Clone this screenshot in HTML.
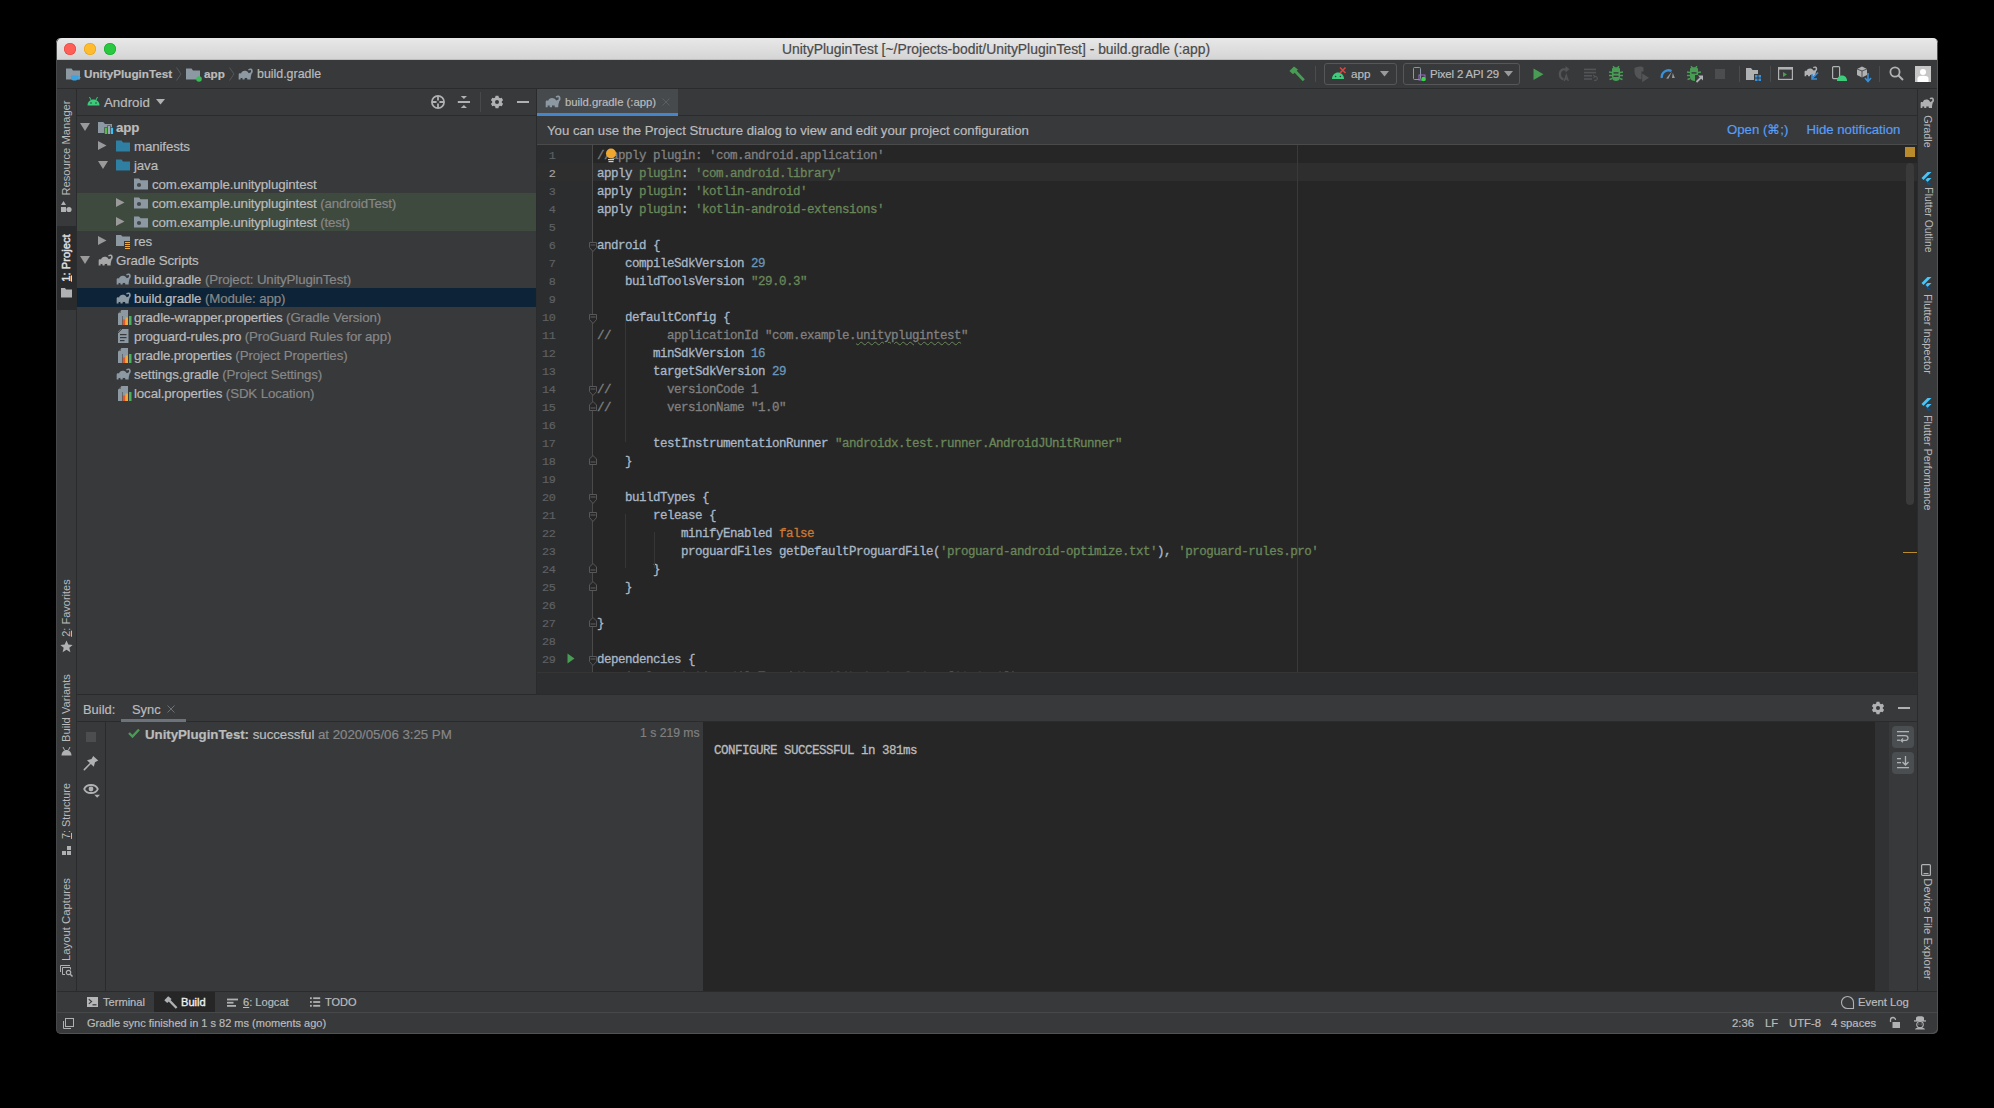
<!DOCTYPE html>
<html><head><meta charset="utf-8">
<style>
*{box-sizing:border-box;margin:0;padding:0}
html,body{width:1994px;height:1108px;background:#000;overflow:hidden}
body{font-family:"Liberation Sans",sans-serif;color:#BBBBBB;position:relative}
.a{position:absolute}
.t{position:absolute;white-space:pre;-webkit-text-stroke:0.2px currentColor}
#win{position:absolute;left:0;top:0;width:1994px;height:1108px;clip-path:inset(38px 56px 74px 56px round 5px);background:#37393B}
.ln{position:absolute;text-align:right;font-family:"Liberation Mono",monospace;font-size:11.8px;letter-spacing:-0.4px;line-height:18px;height:18px;white-space:pre;-webkit-text-stroke:0.2px currentColor}
.code{position:absolute;font-family:"Liberation Mono",monospace;font-size:12.5px;letter-spacing:-0.5px;color:#A9B7C6;line-height:18px;height:18px;white-space:pre;-webkit-text-stroke:0.3px currentColor}
svg{overflow:visible}
</style></head><body>
<div id="win">
<div class="a" style="left:56px;top:38px;width:1882px;height:22px;background:linear-gradient(#E8E8E8,#D4D4D4);"></div>
<div class="a" style="left:56px;top:59px;width:1882px;height:1px;background:#BDBDBD;"></div>
<div class="a" style="left:64px;top:43px;width:12px;height:12px;border-radius:50%;background:#FE5F57;box-shadow:inset 0 0 0 0.6px #E2463F"></div>
<div class="a" style="left:84px;top:43px;width:12px;height:12px;border-radius:50%;background:#FEBC2E;box-shadow:inset 0 0 0 0.6px #E1A116"></div>
<div class="a" style="left:104px;top:43px;width:12px;height:12px;border-radius:50%;background:#28C840;box-shadow:inset 0 0 0 0.6px #13A827"></div>
<div class="t" style="left:782px;top:41px;font-size:13.9px;line-height:16px;height:16px;color:#4A4A4A;">UnityPluginTest [~/Projects-bodit/UnityPluginTest] - build.gradle (:app)</div>
<div class="a" style="left:56px;top:60px;width:1882px;height:28px;background:#37393B;"></div>
<div class="a" style="left:56px;top:88px;width:1882px;height:1px;background:#2A2B2C;"></div>
<svg class="a" style="left:66px;top:68px" width="14" height="12" viewBox="0 0 14 12"><path d="M0,0.5 L5.5,0.5 L7,2.5 L14,2.5 L14,11.5 L0,11.5 Z" fill="#8C99A3"/></svg>
<svg class="a" style="left:70px;top:75px" width="12" height="6" viewBox="0 0 12 6"><path d="M1,0.5 L8,0.5 L8,3 C8,5 6.5,5.5 4.5,5.5 C2.5,5.5 1,5 1,3 Z" fill="#3BA3E0"/><path d="M8,1.5 C10.5,1 11.5,3.5 8,4" stroke="#3BA3E0" fill="none" stroke-width="1"/></svg>
<div class="t" style="left:84px;top:66px;font-size:11.7px;line-height:16px;height:16px;color:#BBBBBB;font-weight:bold">UnityPluginTest</div>
<svg class="a" style="left:176px;top:67px" width="6" height="14" viewBox="0 0 6 14"><path d="M0.5,0.5 L5,7 L0.5,13.5" stroke="#555759" fill="none"/></svg>
<svg class="a" style="left:186px;top:68px" width="14" height="12" viewBox="0 0 14 12"><path d="M0,0.5 L5.5,0.5 L7,2.5 L14,2.5 L14,11.5 L0,11.5 Z" fill="#8C99A3"/></svg>
<svg class="a" style="left:196px;top:76px" width="6" height="6" viewBox="0 0 6 6"><circle cx="3" cy="3" r="2.8" fill="#3DBA5A"/></svg>
<div class="t" style="left:204px;top:66px;font-size:11.7px;line-height:16px;height:16px;color:#BBBBBB;font-weight:bold">app</div>
<svg class="a" style="left:229px;top:67px" width="6" height="14" viewBox="0 0 6 14"><path d="M0.5,0.5 L5,7 L0.5,13.5" stroke="#555759" fill="none"/></svg>
<svg class="a" style="left:238px;top:68px" width="16" height="13" viewBox="0 0 16 13"><g transform="scale(0.95)"><path d="M0.7,12.2 L0.7,6.8 C0.7,5.8 1.4,5.3 2.4,5.5 L3.2,5.7 C3.7,3.8 5.2,2.9 7,2.9 C8.8,2.9 10.1,3.6 10.9,4.9 C11.6,5.9 12.7,6 13.8,5.6 L14.2,6.8 C13.6,8.3 13.3,9.8 13.3,12.2 L9.8,12.2 L9.5,10.3 C8.8,10.6 7.9,10.6 7.2,10.3 L6.9,12.2 L4.8,12.2 L4.5,10.3 C3.9,10.6 3.3,10.6 2.8,10.3 L2.6,12.2 Z" fill="#8C99A3"/><path d="M12.2,6.2 C14,5.8 14.9,4.2 14.6,2.6 C14.3,1.3 13,1 11.6,1.7" stroke="#8C99A3" stroke-width="1.7" fill="none" stroke-linecap="round"/></g></svg>
<div class="t" style="left:257px;top:66px;font-size:12.4px;line-height:16px;height:16px;color:#BBBBBB;">build.gradle</div>
<svg class="a" style="left:1289px;top:66px" width="17" height="16" viewBox="0 0 17 16"><path d="M0.4,5 L5,0.4 L9,3.5 L4,8.3 Z" fill="#499C54"/><path d="M6.2,5.2 L14.8,14.2" stroke="#499C54" stroke-width="2.8"/></svg>
<div class="a" style="left:1315px;top:66px;width:1px;height:16px;background:#4A4C4E;"></div>
<div class="a" style="left:1324px;top:63px;width:73px;height:22px;border:1px solid #555759;border-radius:3px"></div>
<svg class="a" style="left:1331px;top:67px" width="16" height="14" viewBox="0 0 16 14"><path d="M1,12 C1,8 4,5.5 7,5.5 C10,5.5 13,8 13,12 Z" fill="#3DCC7C"/><circle cx="4.6" cy="9.5" r="0.8" fill="#37393B"/><circle cx="9.4" cy="9.5" r="0.8" fill="#37393B"/><path d="M9,0.5 L14.5,6 M14.5,0.5 L9,6" stroke="#E0443E" stroke-width="1.6"/></svg>
<div class="t" style="left:1351px;top:66px;font-size:11.7px;line-height:16px;height:16px;color:#BBBBBB;">app</div>
<svg class="a" style="left:1380px;top:71px" width="9" height="6" viewBox="0 0 9 6"><path d="M0,0 L9,0 L4.5,5.5 Z" fill="#9A9A9A"/></svg>
<div class="a" style="left:1403px;top:63px;width:117px;height:22px;border:1px solid #555759;border-radius:3px"></div>
<svg class="a" style="left:1413px;top:67px" width="14" height="16" viewBox="0 0 14 16"><rect x="0.5" y="0.5" width="7" height="12" rx="1" stroke="#8C99A3" fill="none"/><rect x="6" y="8" width="6" height="5" fill="none" stroke="#9B6BD0"/><circle cx="10.5" cy="12" r="2.2" fill="#3DD34C"/></svg>
<div class="t" style="left:1430px;top:66px;font-size:11.4px;line-height:16px;height:16px;color:#BBBBBB;letter-spacing:-0.15px">Pixel 2 API 29</div>
<svg class="a" style="left:1504px;top:71px" width="9" height="6" viewBox="0 0 9 6"><path d="M0,0 L9,0 L4.5,5.5 Z" fill="#9A9A9A"/></svg>
<svg class="a" style="left:1533px;top:68px" width="11" height="13" viewBox="0 0 11 13"><path d="M0.5,0.5 L10.5,6.2 L0.5,12 Z" fill="#499C54"/></svg>
<svg class="a" style="left:1556px;top:66px" width="16" height="16" viewBox="0 0 16 16"><path d="M7.5,13.5 A5.5,5.5 0 0 1 7,3.3 L10,3.3" stroke="#525456" stroke-width="2.2" fill="none"/><path d="M9.5,0 L13.5,3.3 L9.5,6.6 Z" fill="#525456"/><path d="M8.3,15 L10.3,9 L12.3,15 M9,13 L11.6,13" stroke="#525456" stroke-width="1.3" fill="none"/></svg>
<svg class="a" style="left:1584px;top:68px" width="15" height="14" viewBox="0 0 15 14"><rect x="0" y="0.6" width="12" height="1.6" fill="#525456"/><rect x="0" y="3.8" width="12" height="1.6" fill="#525456"/><rect x="0" y="7" width="8" height="1.6" fill="#525456"/><rect x="0" y="10.2" width="8" height="1.6" fill="#525456"/><path d="M10,8.5 C13,8 14,10 13,11.5 C12.3,12.5 11,12.6 10,12.2" stroke="#525456" stroke-width="1.2" fill="none"/><path d="M9.2,7 L10.8,8.6 L9.5,10" stroke="#525456" stroke-width="1.1" fill="none"/></svg>
<svg class="a" style="left:1609px;top:66px" width="14" height="16" viewBox="0 0 14 16"><path d="M3,3 C3,1.8 4.5,1.2 7,1.2 C9.5,1.2 11,1.8 11,3 L11,11 C11,13.5 9.5,15 7,15 C4.5,15 3,13.5 3,11 Z" fill="#499C54"/><path d="M4,0.2 L5.5,2 M10,0.2 L8.5,2 M0,6 L3,6.5 M14,6 L11,6.5 M0,9.5 L3,9.5 M14,9.5 L11,9.5 M0.5,13.5 L3.2,12.5 M13.5,13.5 L10.8,12.5" stroke="#499C54" stroke-width="1.5"/><rect x="4.5" y="6.2" width="5" height="1.4" fill="#37393B"/><rect x="4.5" y="9.6" width="5" height="1.4" fill="#37393B"/></svg>
<svg class="a" style="left:1634px;top:66px" width="16" height="17" viewBox="0 0 16 17"><path d="M0.5,2 C3,1 5.5,0.6 7.5,0.6 L9.5,1.5 L9.5,5.5 L7.5,5.5 L7.5,13.5 C3,12.5 0.5,9.5 0.5,5.5 Z" fill="#525456"/><path d="M8.2,7.5 L15,11.8 L8.2,16.2 Z" fill="#525456"/></svg>
<svg class="a" style="left:1660px;top:68px" width="16" height="12" viewBox="0 0 16 12"><path d="M1.8,10 A6.8,6.8 0 0 1 11.5,3" stroke="#3A8FD6" stroke-width="2.4" fill="none"/><path d="M6.2,10.5 L12,3.2 L8.4,10.8 Z" fill="#9A9A9A"/><path d="M12.8,4.8 L14.8,10 L12,10 Z" fill="#9A9A9A"/></svg>
<svg class="a" style="left:1687px;top:66px" width="17" height="17" viewBox="0 0 17 17"><path d="M3,3 C3,1.8 4.5,1.2 7,1.2 C9.5,1.2 11,1.8 11,3 L11,9 L8,9 L8,15 C5,15 3,13.5 3,11 Z" fill="#499C54"/><path d="M4,0.2 L5.5,2 M10,0.2 L8.5,2 M0,6 L3,6.5 M14,6 L11,6.5 M0,9.5 L3,9.5 M0.5,13.5 L3.2,12.5" stroke="#499C54" stroke-width="1.5"/><rect x="4.5" y="6.2" width="5" height="1.4" fill="#37393B"/><path d="M9.5,16 L15,10.5" stroke="#AFB1B3" stroke-width="1.8"/><path d="M11,9.5 L16,9.5 L16,14.5 Z" fill="#AFB1B3"/></svg>
<div class="a" style="left:1715px;top:69px;width:10px;height:10px;background:#4B4D4F;"></div>
<div class="a" style="left:1739px;top:66px;width:1px;height:16px;background:#4A4C4E;"></div>
<svg class="a" style="left:1746px;top:67px" width="16" height="14" viewBox="0 0 16 14"><path d="M0,1 L5,1 L6.5,3 L12,3 L12,7 L8,7 L8,13 L0,13 Z" fill="#AFB1B3"/><rect x="9" y="8" width="2.5" height="2.5" fill="#3A8FD6"/><rect x="12.5" y="8" width="2.5" height="2.5" fill="#3A8FD6"/><rect x="9" y="11.5" width="2.5" height="2.5" fill="#3A8FD6"/><rect x="12.5" y="11.5" width="2.5" height="2.5" fill="#3A8FD6"/></svg>
<div class="a" style="left:1770px;top:66px;width:1px;height:16px;background:#4A4C4E;"></div>
<svg class="a" style="left:1778px;top:67px" width="15" height="13" viewBox="0 0 15 13"><rect x="0.6" y="0.6" width="13.8" height="11.8" stroke="#AFB1B3" fill="none" stroke-width="1.2"/><rect x="0.6" y="0.6" width="13.8" height="2" fill="#AFB1B3"/><path d="M5,5 L9,7.5 L5,10 Z" fill="#499C54"/></svg>
<svg class="a" style="left:1804px;top:66px" width="14" height="12" viewBox="0 0 14 12"><g transform="scale(0.85)"><path d="M0.7,12.2 L0.7,6.8 C0.7,5.8 1.4,5.3 2.4,5.5 L3.2,5.7 C3.7,3.8 5.2,2.9 7,2.9 C8.8,2.9 10.1,3.6 10.9,4.9 C11.6,5.9 12.7,6 13.8,5.6 L14.2,6.8 C13.6,8.3 13.3,9.8 13.3,12.2 L9.8,12.2 L9.5,10.3 C8.8,10.6 7.9,10.6 7.2,10.3 L6.9,12.2 L4.8,12.2 L4.5,10.3 C3.9,10.6 3.3,10.6 2.8,10.3 L2.6,12.2 Z" fill="#AFB1B3"/><path d="M12.2,6.2 C14,5.8 14.9,4.2 14.6,2.6 C14.3,1.3 13,1 11.6,1.7" stroke="#AFB1B3" stroke-width="1.7" fill="none" stroke-linecap="round"/></g></svg>
<svg class="a" style="left:1811px;top:72px" width="8" height="9" viewBox="0 0 8 9"><path d="M7,0.5 L1.5,6 M1,2 L1,7 L6,7" stroke="#3A8FD6" stroke-width="1.6" fill="none"/></svg>
<svg class="a" style="left:1832px;top:66px" width="14" height="16" viewBox="0 0 14 16"><rect x="0.6" y="0.6" width="7" height="12" rx="1" stroke="#AFB1B3" fill="none" stroke-width="1.2"/><path d="M5,15 C5,11 7.5,9.5 10,9.5 C12.5,9.5 15,11 15,15 Z" fill="#3DCC7C"/></svg>
<svg class="a" style="left:1856px;top:66px" width="16" height="17" viewBox="0 0 16 17"><path d="M1,3 L6,0.5 L11,3 L11,9 L6,11.5 L1,9 Z" fill="#AFB1B3"/><path d="M6,5 L6,11.5 M1,3 L6,5 L11,3" stroke="#37393B" stroke-width="0.8" fill="none"/><path d="M12,7 L12,15 M9,12 L12,15.5 L15,12" stroke="#3A8FD6" stroke-width="1.6" fill="none"/></svg>
<div class="a" style="left:1879px;top:66px;width:1px;height:16px;background:#4A4C4E;"></div>
<svg class="a" style="left:1889px;top:66px" width="15" height="15" viewBox="0 0 15 15"><circle cx="6" cy="6" r="4.6" stroke="#AFB1B3" stroke-width="1.8" fill="none"/><path d="M9.5,9.5 L14,14" stroke="#AFB1B3" stroke-width="2"/></svg>
<svg class="a" style="left:1915px;top:66px" width="16" height="16" viewBox="0 0 16 16"><rect x="0" y="0" width="16" height="16" fill="#C6C6C6"/><circle cx="8" cy="6" r="3" fill="#fff"/><path d="M2.5,16 L2.5,12.5 C2.5,10.5 4.5,9.8 8,9.8 C11.5,9.8 13.5,10.5 13.5,12.5 L13.5,16 Z" fill="#fff"/></svg>
<div class="a" style="left:56px;top:89px;width:20px;height:902px;background:#37393B;"></div>
<div class="a" style="left:76px;top:89px;width:1px;height:902px;background:#2A2B2C;"></div>
<div class="a" style="left:1917px;top:89px;width:1px;height:902px;background:#2A2B2C;"></div>
<div class="a" style="left:57px;top:226px;width:19px;height:84px;background:#2A2B2D;"></div>
<div class="a" style="left:59px;top:196px;width:96px;height:14px;transform:rotate(-90deg);transform-origin:0 0;font-size:11.2px;line-height:14px;white-space:pre;color:#BBBBBB;text-align:center">Resource Manager</div>
<svg class="a" style="left:61px;top:201px" width="11" height="12" viewBox="0 0 11 12"><path d="M2.5,0 L5,4 L0,4 Z" fill="#AFB1B3"/><rect x="0" y="6" width="5" height="5" fill="#AFB1B3"/><circle cx="8" cy="8.5" r="2.6" fill="#AFB1B3"/></svg>
<div class="a" style="left:59px;top:282px;width:48px;height:14px;transform:rotate(-90deg);transform-origin:0 0;font-size:11.2px;line-height:14px;white-space:pre;color:#E0E0E0;-webkit-text-stroke:0.45px #E0E0E0;text-align:center"><u>1</u>: Project</div>
<svg class="a" style="left:61px;top:288px" width="11" height="10" viewBox="0 0 11 10"><path d="M0,0 L4,0 L5,1.5 L11,1.5 L11,9.5 L0,9.5 Z" fill="#AFB1B3"/></svg>
<div class="a" style="left:59px;top:637px;width:58px;height:14px;transform:rotate(-90deg);transform-origin:0 0;font-size:11.0px;line-height:14px;white-space:pre;color:#BBBBBB;text-align:center"><u>2</u>: Favorites</div>
<svg class="a" style="left:60px;top:640px" width="13" height="13" viewBox="0 0 13 13"><path d="M6.5,0.5 L8.3,4.6 L12.7,4.9 L9.3,7.8 L10.4,12.2 L6.5,9.8 L2.6,12.2 L3.7,7.8 L0.3,4.9 L4.7,4.6 Z" fill="#AFB1B3"/></svg>
<div class="a" style="left:59px;top:742px;width:68px;height:14px;transform:rotate(-90deg);transform-origin:0 0;font-size:11.15px;line-height:14px;white-space:pre;color:#BBBBBB;text-align:center">Build Variants</div>
<svg class="a" style="left:61px;top:747px" width="11" height="9" viewBox="0 0 11 9"><path d="M0.5,8.5 C0.5,5 3,3 5.5,3 C8,3 10.5,5 10.5,8.5 Z" fill="#AFB1B3"/><path d="M2,0 L3.5,3 M9,0 L7.5,3" stroke="#AFB1B3"/></svg>
<div class="a" style="left:59px;top:839px;width:56px;height:14px;transform:rotate(-90deg);transform-origin:0 0;font-size:10.8px;line-height:14px;white-space:pre;color:#BBBBBB;text-align:center"><u>7</u>: Structure</div>
<svg class="a" style="left:61px;top:845px" width="11" height="11" viewBox="0 0 11 11"><rect x="6" y="1" width="4" height="4" fill="#AFB1B3"/><rect x="1" y="6" width="4" height="4" fill="#AFB1B3"/><rect x="6" y="6" width="4" height="4" fill="#AFB1B3"/></svg>
<div class="a" style="left:59px;top:961px;width:83px;height:14px;transform:rotate(-90deg);transform-origin:0 0;font-size:11.3px;line-height:14px;white-space:pre;color:#BBBBBB;text-align:center">Layout Captures</div>
<svg class="a" style="left:59px;top:964px" width="15" height="14" viewBox="0 0 15 14"><path d="M1.5,8 L1.5,1.5 L11,1.5" stroke="#AFB1B3" fill="none"/><path d="M6,10.5 L3.5,10.5 L3.5,3.5 L11.5,3.5 L11.5,5.5" stroke="#AFB1B3" fill="none"/><circle cx="9.5" cy="8.5" r="2.2" stroke="#AFB1B3" stroke-width="1.2" fill="none"/><path d="M11,10 L13.5,12.5" stroke="#AFB1B3" stroke-width="1.4"/></svg>
<svg class="a" style="left:1920px;top:97px" width="15" height="12" viewBox="0 0 15 12"><g transform="scale(0.9)"><path d="M0.7,12.2 L0.7,6.8 C0.7,5.8 1.4,5.3 2.4,5.5 L3.2,5.7 C3.7,3.8 5.2,2.9 7,2.9 C8.8,2.9 10.1,3.6 10.9,4.9 C11.6,5.9 12.7,6 13.8,5.6 L14.2,6.8 C13.6,8.3 13.3,9.8 13.3,12.2 L9.8,12.2 L9.5,10.3 C8.8,10.6 7.9,10.6 7.2,10.3 L6.9,12.2 L4.8,12.2 L4.5,10.3 C3.9,10.6 3.3,10.6 2.8,10.3 L2.6,12.2 Z" fill="#AFB1B3"/><path d="M12.2,6.2 C14,5.8 14.9,4.2 14.6,2.6 C14.3,1.3 13,1 11.6,1.7" stroke="#AFB1B3" stroke-width="1.7" fill="none" stroke-linecap="round"/></g></svg>
<div class="a" style="left:1935px;top:115px;width:33px;height:14px;transform:rotate(90deg);transform-origin:0 0;font-size:10.85px;line-height:14px;white-space:pre;color:#BBBBBB;text-align:center">Gradle</div>
<svg class="a" style="left:1921px;top:172px" width="11" height="13" viewBox="0 0 11 13"><path d="M6.5,0 L10.5,0 L2.5,8 L0.5,6 Z" fill="#47C5FB"/><path d="M6.5,6 L10.5,6 L6.5,10 L4.5,8 Z" fill="#47C5FB"/><path d="M4.5,8 L6.5,10 L10.5,12.5 L6.5,12.5 Z" fill="#00569E"/></svg>
<div class="a" style="left:1935px;top:187px;width:66px;height:14px;transform:rotate(90deg);transform-origin:0 0;font-size:10.4px;line-height:14px;white-space:pre;color:#BBBBBB;text-align:center">Flutter Outline</div>
<svg class="a" style="left:1921px;top:277px" width="11" height="13" viewBox="0 0 11 13"><path d="M6.5,0 L10.5,0 L2.5,8 L0.5,6 Z" fill="#47C5FB"/><path d="M6.5,6 L10.5,6 L6.5,10 L4.5,8 Z" fill="#47C5FB"/><path d="M4.5,8 L6.5,10 L10.5,12.5 L6.5,12.5 Z" fill="#00569E"/></svg>
<div class="a" style="left:1935px;top:294px;width:80px;height:14px;transform:rotate(90deg);transform-origin:0 0;font-size:11.05px;line-height:14px;white-space:pre;color:#BBBBBB;text-align:center">Flutter Inspector</div>
<svg class="a" style="left:1921px;top:398px" width="11" height="13" viewBox="0 0 11 13"><path d="M6.5,0 L10.5,0 L2.5,8 L0.5,6 Z" fill="#47C5FB"/><path d="M6.5,6 L10.5,6 L6.5,10 L4.5,8 Z" fill="#47C5FB"/><path d="M4.5,8 L6.5,10 L10.5,12.5 L6.5,12.5 Z" fill="#00569E"/></svg>
<div class="a" style="left:1935px;top:415px;width:95px;height:14px;transform:rotate(90deg);transform-origin:0 0;font-size:10.8px;line-height:14px;white-space:pre;color:#BBBBBB;text-align:center">Flutter Performance</div>
<svg class="a" style="left:1921px;top:864px" width="10" height="12" viewBox="0 0 10 12"><rect x="0.6" y="0.6" width="8.8" height="10.8" rx="1" stroke="#AFB1B3" fill="none" stroke-width="1.2"/><rect x="2.5" y="9" width="5" height="1" fill="#AFB1B3"/></svg>
<div class="a" style="left:1935px;top:878px;width:102px;height:14px;transform:rotate(90deg);transform-origin:0 0;font-size:11.35px;line-height:14px;white-space:pre;color:#BBBBBB;text-align:center">Device File Explorer</div>
<div class="a" style="left:77px;top:89px;width:459px;height:26px;background:#37393B;"></div>
<div class="a" style="left:77px;top:115px;width:459px;height:1px;background:#2A2B2C;"></div>
<div class="a" style="left:536px;top:89px;width:1px;height:605px;background:#2A2B2C;"></div>
<svg class="a" style="left:87px;top:97px" width="13" height="9" viewBox="0 0 13 9"><path d="M0.5,8.5 C0.5,5 3,2.5 6.5,2.5 C10,2.5 12.5,5 12.5,8.5 Z" fill="#3DCC7C"/><path d="M2.5,0 L4,3 M10.5,0 L9,3" stroke="#3DCC7C" stroke-width="1"/><circle cx="4" cy="6" r="0.8" fill="#37393B"/><circle cx="9" cy="6" r="0.8" fill="#37393B"/></svg>
<div class="t" style="left:104px;top:94px;font-size:13.3px;line-height:17px;height:17px;color:#BBBBBB;">Android</div>
<svg class="a" style="left:156px;top:99px" width="9" height="6" viewBox="0 0 9 6"><path d="M0,0 L9,0 L4.5,5.5 Z" fill="#AFB1B3"/></svg>
<svg class="a" style="left:431px;top:95px" width="14" height="14" viewBox="0 0 14 14"><circle cx="7" cy="7" r="6.1" stroke="#AFB1B3" stroke-width="1.7" fill="none"/><path d="M7,1 L7,5.6 M7,8.4 L7,13 M1,7 L5.6,7 M8.4,7 L13,7" stroke="#AFB1B3" stroke-width="1.8"/></svg>
<svg class="a" style="left:457px;top:95px" width="14" height="14" viewBox="0 0 14 14"><rect x="0.8" y="6" width="12.2" height="2" fill="#AFB1B3"/><path d="M3.8,1 L10,1 L6.9,3.9 Z" fill="#AFB1B3"/><path d="M3.8,13 L10,13 L6.9,10.1 Z" fill="#AFB1B3"/></svg>
<div class="a" style="left:480px;top:92px;width:1px;height:20px;background:#47494B;"></div>
<svg class="a" style="left:490px;top:95px" width="14" height="14" viewBox="0 0 14 14"><path d="M8.84,2.46 L8.44,0.76 L5.56,0.76 L5.16,2.46 L3.98,3.14 L2.32,2.64 L0.88,5.13 L2.15,6.32 L2.15,7.68 L0.88,8.87 L2.32,11.36 L3.98,10.86 L5.16,11.54 L5.56,13.24 L8.44,13.24 L8.84,11.54 L10.02,10.86 L11.68,11.36 L13.12,8.87 L11.85,7.68 L11.85,6.32 L13.12,5.13 L11.68,2.64 L10.02,3.14 Z" fill="#AFB1B3"/><circle cx="7" cy="7" r="2" fill="#37393B"/></svg>
<div class="a" style="left:517px;top:101px;width:12px;height:2px;background:#AFB1B3;"></div>
<svg class="a" style="left:80px;top:123px" width="10" height="8" viewBox="0 0 10 8"><path d="M0,0 L10,0 L5,8 Z" fill="#9A9A9A"/></svg>
<svg class="a" style="left:98px;top:122px" width="17" height="13" viewBox="0 0 17 13"><path d="M0,0 L5.2,0 L7,2 L14,2 L14,11 L0,11 Z" fill="#8C99A3"/><rect x="6.3" y="5.3" width="3.3" height="7.2" fill="#37393B"/><rect x="9.3" y="3.4" width="3.3" height="9.1" fill="#37393B"/><rect x="12.3" y="5.3" width="3.3" height="7.2" fill="#37393B"/><rect x="6.8" y="5.8" width="2.3" height="6.2" fill="#55B94C"/><rect x="9.8" y="3.9" width="2.3" height="8.1" fill="#9AA7B0"/><rect x="12.8" y="5.8" width="2.3" height="6.2" fill="#3BC0F0"/></svg>
<div class="t" style="left:116px;top:119px;font-size:13.3px;line-height:18px;height:18px;color:#BBBBBB;font-weight:bold;letter-spacing:-0.12px">app</div>
<svg class="a" style="left:98px;top:141px" width="9" height="9" viewBox="0 0 9 9"><path d="M0,0 L8.5,4.5 L0,9 Z" fill="#9A9A9A"/></svg>
<svg class="a" style="left:116px;top:140px" width="14" height="12" viewBox="0 0 14 12"><path d="M0,0.5 L5.5,0.5 L7,2.5 L14,2.5 L14,11.5 L0,11.5 Z" fill="#2F7FA3"/></svg>
<div class="t" style="left:134px;top:138px;font-size:13.3px;line-height:18px;height:18px;color:#BBBBBB;letter-spacing:-0.12px">manifests</div>
<svg class="a" style="left:98px;top:161px" width="10" height="8" viewBox="0 0 10 8"><path d="M0,0 L10,0 L5,8 Z" fill="#9A9A9A"/></svg>
<svg class="a" style="left:116px;top:159px" width="14" height="12" viewBox="0 0 14 12"><path d="M0,0.5 L5.5,0.5 L7,2.5 L14,2.5 L14,11.5 L0,11.5 Z" fill="#2F7FA3"/></svg>
<div class="t" style="left:134px;top:157px;font-size:13.3px;line-height:18px;height:18px;color:#BBBBBB;letter-spacing:-0.12px">java</div>
<svg class="a" style="left:134px;top:177.5px" width="14" height="12" viewBox="0 0 14 12"><path d="M0,0.5 L5,0.5 L6.5,2.2 L14,2.2 L14,11.5 L0,11.5 Z" fill="#8C99A3"/><circle cx="5" cy="7" r="2.1" fill="#37393B" opacity="0.85"/></svg>
<div class="t" style="left:152px;top:176px;font-size:13.3px;line-height:18px;height:18px;color:#BBBBBB;letter-spacing:-0.12px">com.example.unityplugintest</div>
<div class="a" style="left:77px;top:193px;width:459px;height:19px;background:#3F4A3F;"></div>
<svg class="a" style="left:116px;top:198px" width="9" height="9" viewBox="0 0 9 9"><path d="M0,0 L8.5,4.5 L0,9 Z" fill="#9A9A9A"/></svg>
<svg class="a" style="left:134px;top:196.5px" width="14" height="12" viewBox="0 0 14 12"><path d="M0,0.5 L5,0.5 L6.5,2.2 L14,2.2 L14,11.5 L0,11.5 Z" fill="#8C99A3"/><circle cx="5" cy="7" r="2.1" fill="#37393B" opacity="0.85"/></svg>
<div class="t" style="left:152px;top:195px;font-size:13.3px;line-height:18px;height:18px;color:#BBBBBB;letter-spacing:-0.12px">com.example.unityplugintest <span style="color:#878787">(androidTest)</span></div>
<div class="a" style="left:77px;top:212px;width:459px;height:19px;background:#3F4A3F;"></div>
<svg class="a" style="left:116px;top:217px" width="9" height="9" viewBox="0 0 9 9"><path d="M0,0 L8.5,4.5 L0,9 Z" fill="#9A9A9A"/></svg>
<svg class="a" style="left:134px;top:215.5px" width="14" height="12" viewBox="0 0 14 12"><path d="M0,0.5 L5,0.5 L6.5,2.2 L14,2.2 L14,11.5 L0,11.5 Z" fill="#8C99A3"/><circle cx="5" cy="7" r="2.1" fill="#37393B" opacity="0.85"/></svg>
<div class="t" style="left:152px;top:214px;font-size:13.3px;line-height:18px;height:18px;color:#BBBBBB;letter-spacing:-0.12px">com.example.unityplugintest <span style="color:#878787">(test)</span></div>
<svg class="a" style="left:98px;top:236px" width="9" height="9" viewBox="0 0 9 9"><path d="M0,0 L8.5,4.5 L0,9 Z" fill="#9A9A9A"/></svg>
<svg class="a" style="left:116px;top:235px" width="16" height="15" viewBox="0 0 16 15"><path d="M0,0 L5,0 L6.5,1.5 L14,1.5 L14,11 L0,11 Z" fill="#8C99A3"/><rect x="8" y="6" width="7" height="9" fill="#37393B"/><rect x="9" y="7" width="5" height="1" fill="#F0A83A"/><rect x="9" y="9" width="5" height="1" fill="#F0A83A"/><rect x="9" y="11" width="5" height="1" fill="#F0A83A"/><rect x="9" y="13" width="5" height="1" fill="#F0A83A"/></svg>
<div class="t" style="left:134px;top:233px;font-size:13.3px;line-height:18px;height:18px;color:#BBBBBB;letter-spacing:-0.12px">res</div>
<svg class="a" style="left:80px;top:256px" width="10" height="8" viewBox="0 0 10 8"><path d="M0,0 L10,0 L5,8 Z" fill="#9A9A9A"/></svg>
<svg class="a" style="left:98px;top:254px" width="16" height="13" viewBox="0 0 16 13"><g transform="scale(0.95)"><path d="M0.7,12.2 L0.7,6.8 C0.7,5.8 1.4,5.3 2.4,5.5 L3.2,5.7 C3.7,3.8 5.2,2.9 7,2.9 C8.8,2.9 10.1,3.6 10.9,4.9 C11.6,5.9 12.7,6 13.8,5.6 L14.2,6.8 C13.6,8.3 13.3,9.8 13.3,12.2 L9.8,12.2 L9.5,10.3 C8.8,10.6 7.9,10.6 7.2,10.3 L6.9,12.2 L4.8,12.2 L4.5,10.3 C3.9,10.6 3.3,10.6 2.8,10.3 L2.6,12.2 Z" fill="#A8A8A8"/><path d="M12.2,6.2 C14,5.8 14.9,4.2 14.6,2.6 C14.3,1.3 13,1 11.6,1.7" stroke="#A8A8A8" stroke-width="1.7" fill="none" stroke-linecap="round"/></g></svg>
<div class="t" style="left:116px;top:252px;font-size:13.3px;line-height:18px;height:18px;color:#BBBBBB;letter-spacing:-0.12px">Gradle Scripts</div>
<svg class="a" style="left:116px;top:273px" width="16" height="13" viewBox="0 0 16 13"><g transform="scale(0.95)"><path d="M0.7,12.2 L0.7,6.8 C0.7,5.8 1.4,5.3 2.4,5.5 L3.2,5.7 C3.7,3.8 5.2,2.9 7,2.9 C8.8,2.9 10.1,3.6 10.9,4.9 C11.6,5.9 12.7,6 13.8,5.6 L14.2,6.8 C13.6,8.3 13.3,9.8 13.3,12.2 L9.8,12.2 L9.5,10.3 C8.8,10.6 7.9,10.6 7.2,10.3 L6.9,12.2 L4.8,12.2 L4.5,10.3 C3.9,10.6 3.3,10.6 2.8,10.3 L2.6,12.2 Z" fill="#8C99A3"/><path d="M12.2,6.2 C14,5.8 14.9,4.2 14.6,2.6 C14.3,1.3 13,1 11.6,1.7" stroke="#8C99A3" stroke-width="1.7" fill="none" stroke-linecap="round"/></g></svg>
<div class="t" style="left:134px;top:271px;font-size:13.3px;line-height:18px;height:18px;color:#BBBBBB;letter-spacing:-0.12px">build.gradle <span style="color:#878787">(Project: UnityPluginTest)</span></div>
<div class="a" style="left:77px;top:288px;width:459px;height:19px;background:#0D2438;"></div>
<svg class="a" style="left:116px;top:292px" width="16" height="13" viewBox="0 0 16 13"><g transform="scale(0.95)"><path d="M0.7,12.2 L0.7,6.8 C0.7,5.8 1.4,5.3 2.4,5.5 L3.2,5.7 C3.7,3.8 5.2,2.9 7,2.9 C8.8,2.9 10.1,3.6 10.9,4.9 C11.6,5.9 12.7,6 13.8,5.6 L14.2,6.8 C13.6,8.3 13.3,9.8 13.3,12.2 L9.8,12.2 L9.5,10.3 C8.8,10.6 7.9,10.6 7.2,10.3 L6.9,12.2 L4.8,12.2 L4.5,10.3 C3.9,10.6 3.3,10.6 2.8,10.3 L2.6,12.2 Z" fill="#8C99A3"/><path d="M12.2,6.2 C14,5.8 14.9,4.2 14.6,2.6 C14.3,1.3 13,1 11.6,1.7" stroke="#8C99A3" stroke-width="1.7" fill="none" stroke-linecap="round"/></g></svg>
<div class="t" style="left:134px;top:290px;font-size:13.3px;line-height:18px;height:18px;color:#BBBBBB;letter-spacing:-0.12px">build.gradle <span style="color:#878787">(Module: app)</span></div>
<svg class="a" style="left:118px;top:310px" width="14" height="15" viewBox="0 0 14 15"><path d="M0,3.5 L3.5,0 L10,0 L10,15 L0,15 Z" fill="#8C99A3"/><path d="M0,3 L3,0 L3,3 Z" fill="#37393B" opacity="0.5"/><rect x="4.5" y="9.5" width="2.5" height="5.5" fill="#E05B2A"/><rect x="7.5" y="7.5" width="2.5" height="7.5" fill="#F2A93B"/><rect x="11" y="6" width="2.5" height="9" fill="#4FAE5C"/><rect x="4" y="6" width="0.5" height="9" fill="#37393B"/></svg>
<div class="t" style="left:134px;top:309px;font-size:13.3px;line-height:18px;height:18px;color:#BBBBBB;letter-spacing:-0.12px">gradle-wrapper.properties <span style="color:#878787">(Gradle Version)</span></div>
<svg class="a" style="left:118px;top:329px" width="11" height="15" viewBox="0 0 11 15"><path d="M0,4 L4,0 L10.5,0 L10.5,14 L0,14 Z" fill="#8C99A3"/><path d="M0,3 L3,0 L3,3 Z" fill="#8C99A3"/><path d="M0,4 L4,0" stroke="#37393B" stroke-width="0.8"/><rect x="2" y="5" width="6.5" height="1.2" fill="#37393B"/><rect x="2" y="8" width="6.5" height="1.2" fill="#37393B"/><rect x="2" y="11" width="4.5" height="1.2" fill="#37393B"/></svg>
<div class="t" style="left:134px;top:328px;font-size:13.3px;line-height:18px;height:18px;color:#BBBBBB;letter-spacing:-0.12px">proguard-rules.pro <span style="color:#878787">(ProGuard Rules for app)</span></div>
<svg class="a" style="left:118px;top:348px" width="14" height="15" viewBox="0 0 14 15"><path d="M0,3.5 L3.5,0 L10,0 L10,15 L0,15 Z" fill="#8C99A3"/><path d="M0,3 L3,0 L3,3 Z" fill="#37393B" opacity="0.5"/><rect x="4.5" y="9.5" width="2.5" height="5.5" fill="#E05B2A"/><rect x="7.5" y="7.5" width="2.5" height="7.5" fill="#F2A93B"/><rect x="11" y="6" width="2.5" height="9" fill="#4FAE5C"/><rect x="4" y="6" width="0.5" height="9" fill="#37393B"/></svg>
<div class="t" style="left:134px;top:347px;font-size:13.3px;line-height:18px;height:18px;color:#BBBBBB;letter-spacing:-0.12px">gradle.properties <span style="color:#878787">(Project Properties)</span></div>
<svg class="a" style="left:116px;top:368px" width="16" height="13" viewBox="0 0 16 13"><g transform="scale(0.95)"><path d="M0.7,12.2 L0.7,6.8 C0.7,5.8 1.4,5.3 2.4,5.5 L3.2,5.7 C3.7,3.8 5.2,2.9 7,2.9 C8.8,2.9 10.1,3.6 10.9,4.9 C11.6,5.9 12.7,6 13.8,5.6 L14.2,6.8 C13.6,8.3 13.3,9.8 13.3,12.2 L9.8,12.2 L9.5,10.3 C8.8,10.6 7.9,10.6 7.2,10.3 L6.9,12.2 L4.8,12.2 L4.5,10.3 C3.9,10.6 3.3,10.6 2.8,10.3 L2.6,12.2 Z" fill="#8C99A3"/><path d="M12.2,6.2 C14,5.8 14.9,4.2 14.6,2.6 C14.3,1.3 13,1 11.6,1.7" stroke="#8C99A3" stroke-width="1.7" fill="none" stroke-linecap="round"/></g></svg>
<div class="t" style="left:134px;top:366px;font-size:13.3px;line-height:18px;height:18px;color:#BBBBBB;letter-spacing:-0.12px">settings.gradle <span style="color:#878787">(Project Settings)</span></div>
<svg class="a" style="left:118px;top:386px" width="14" height="15" viewBox="0 0 14 15"><path d="M0,3.5 L3.5,0 L10,0 L10,15 L0,15 Z" fill="#8C99A3"/><path d="M0,3 L3,0 L3,3 Z" fill="#37393B" opacity="0.5"/><rect x="4.5" y="9.5" width="2.5" height="5.5" fill="#E05B2A"/><rect x="7.5" y="7.5" width="2.5" height="7.5" fill="#F2A93B"/><rect x="11" y="6" width="2.5" height="9" fill="#4FAE5C"/><rect x="4" y="6" width="0.5" height="9" fill="#37393B"/></svg>
<div class="t" style="left:134px;top:385px;font-size:13.3px;line-height:18px;height:18px;color:#BBBBBB;letter-spacing:-0.12px">local.properties <span style="color:#878787">(SDK Location)</span></div>
<div class="a" style="left:537px;top:89px;width:1380px;height:27px;background:#37393B;"></div>
<div class="a" style="left:537px;top:89px;width:141px;height:24px;background:#464A4C;"></div>
<div class="a" style="left:537px;top:113px;width:141px;height:3px;background:#4585CC;"></div>
<div class="a" style="left:678px;top:115px;width:1239px;height:1px;background:#2A2B2C;"></div>
<svg class="a" style="left:545px;top:95px" width="17" height="14" viewBox="0 0 17 14"><g transform="scale(1.0)"><path d="M0.7,12.2 L0.7,6.8 C0.7,5.8 1.4,5.3 2.4,5.5 L3.2,5.7 C3.7,3.8 5.2,2.9 7,2.9 C8.8,2.9 10.1,3.6 10.9,4.9 C11.6,5.9 12.7,6 13.8,5.6 L14.2,6.8 C13.6,8.3 13.3,9.8 13.3,12.2 L9.8,12.2 L9.5,10.3 C8.8,10.6 7.9,10.6 7.2,10.3 L6.9,12.2 L4.8,12.2 L4.5,10.3 C3.9,10.6 3.3,10.6 2.8,10.3 L2.6,12.2 Z" fill="#8C99A3"/><path d="M12.2,6.2 C14,5.8 14.9,4.2 14.6,2.6 C14.3,1.3 13,1 11.6,1.7" stroke="#8C99A3" stroke-width="1.7" fill="none" stroke-linecap="round"/></g></svg>
<div class="t" style="left:565px;top:94px;font-size:11.3px;line-height:16px;height:16px;color:#BBBBBB;">build.gradle (:app)</div>
<svg class="a" style="left:662px;top:98px" width="8" height="8" viewBox="0 0 8 8"><path d="M0.5,0.5 L7.5,7.5 M7.5,0.5 L0.5,7.5" stroke="#5C5F61" stroke-width="1"/></svg>
<div class="a" style="left:537px;top:116px;width:1380px;height:28px;background:#37393B;"></div>
<div class="a" style="left:537px;top:144px;width:1380px;height:1px;background:#4A4A4A;"></div>
<div class="t" style="left:547px;top:122px;font-size:13.2px;line-height:17px;height:17px;color:#BBBBBB;">You can use the Project Structure dialog to view and edit your project configuration</div>
<div class="t" style="left:1727px;top:121px;font-size:13.2px;line-height:17px;height:17px;color:#589DF6;">Open (⌘;)</div>
<div class="t" style="left:1806.5px;top:121px;font-size:13.2px;line-height:17px;height:17px;color:#589DF6;">Hide notification</div>
<div class="a" style="left:537px;top:145px;width:1380px;height:527px;background:#262626;"></div>
<div class="a" style="left:537px;top:145px;width:55px;height:527px;background:#2C2D2F;"></div>
<div class="a" style="left:537px;top:163px;width:1380px;height:18px;background:#2E2E2E;"></div>
<div class="a" style="left:592px;top:145px;width:1px;height:527px;background:#4A4A4A;"></div>
<div class="a" style="left:1297px;top:145px;width:1px;height:527px;background:#3A3A3A;"></div>
<div class="a" style="left:537px;top:672px;width:1380px;height:22px;background:#2D2E30;"></div>
<div class="a" style="left:537px;top:672px;width:1380px;height:1px;background:#353535;"></div>
<div class="a" style="left:1905px;top:147px;width:10px;height:10px;background:#B98B2B;"></div>
<div class="a" style="left:1906px;top:163px;width:8px;height:342px;background:#3A3A3A;border-radius:4px"></div>
<div class="a" style="left:1903px;top:552px;width:14px;height:1px;background:#B98B2B;"></div>
<div class="a" style="left:537px;top:145px;width:1380px;height:527px;overflow:hidden">
<div class="ln" style="left:-1.7px;top:2px;width:20px;color:#5E6164">1</div>
<div class="code" style="left:60px;top:2px"><span style="color:#808080">//apply plugin: &#x27;com.android.application&#x27;</span></div>
<div class="ln" style="left:-1.7px;top:20px;width:20px;color:#A4A3A3">2</div>
<div class="code" style="left:60px;top:20px"><span style="color:#A9B7C6">apply </span><span style="color:#6A8759">plugin</span><span style="color:#A9B7C6">: </span><span style="color:#6A8759">&#x27;com.android.library&#x27;</span></div>
<div class="ln" style="left:-1.7px;top:38px;width:20px;color:#5E6164">3</div>
<div class="code" style="left:60px;top:38px"><span style="color:#A9B7C6">apply </span><span style="color:#6A8759">plugin</span><span style="color:#A9B7C6">: </span><span style="color:#6A8759">&#x27;kotlin-android&#x27;</span></div>
<div class="ln" style="left:-1.7px;top:56px;width:20px;color:#5E6164">4</div>
<div class="code" style="left:60px;top:56px"><span style="color:#A9B7C6">apply </span><span style="color:#6A8759">plugin</span><span style="color:#A9B7C6">: </span><span style="color:#6A8759">&#x27;kotlin-android-extensions&#x27;</span></div>
<div class="ln" style="left:-1.7px;top:74px;width:20px;color:#5E6164">5</div>
<div class="code" style="left:60px;top:74px"></div>
<div class="ln" style="left:-1.7px;top:92px;width:20px;color:#5E6164">6</div>
<div class="code" style="left:60px;top:92px"><span style="color:#A9B7C6">android {</span></div>
<div class="ln" style="left:-1.7px;top:110px;width:20px;color:#5E6164">7</div>
<div class="code" style="left:60px;top:110px"><span style="color:#A9B7C6">    compileSdkVersion </span><span style="color:#6897BB">29</span></div>
<div class="ln" style="left:-1.7px;top:128px;width:20px;color:#5E6164">8</div>
<div class="code" style="left:60px;top:128px"><span style="color:#A9B7C6">    buildToolsVersion </span><span style="color:#6A8759">&quot;29.0.3&quot;</span></div>
<div class="ln" style="left:-1.7px;top:146px;width:20px;color:#5E6164">9</div>
<div class="code" style="left:60px;top:146px"></div>
<div class="ln" style="left:-1.7px;top:164px;width:20px;color:#5E6164">10</div>
<div class="code" style="left:60px;top:164px"><span style="color:#A9B7C6">    defaultConfig {</span></div>
<div class="ln" style="left:-1.7px;top:182px;width:20px;color:#5E6164">11</div>
<div class="code" style="left:60px;top:182px"><span style="color:#808080">//        applicationId &quot;com.example.</span><span style="color:#808080;text-decoration:underline wavy #6A8759;text-decoration-thickness:1px;text-underline-offset:2px">unityplugintest</span><span style="color:#808080">&quot;</span></div>
<div class="ln" style="left:-1.7px;top:200px;width:20px;color:#5E6164">12</div>
<div class="code" style="left:60px;top:200px"><span style="color:#A9B7C6">        minSdkVersion </span><span style="color:#6897BB">16</span></div>
<div class="ln" style="left:-1.7px;top:218px;width:20px;color:#5E6164">13</div>
<div class="code" style="left:60px;top:218px"><span style="color:#A9B7C6">        targetSdkVersion </span><span style="color:#6897BB">29</span></div>
<div class="ln" style="left:-1.7px;top:236px;width:20px;color:#5E6164">14</div>
<div class="code" style="left:60px;top:236px"><span style="color:#808080">//        versionCode 1</span></div>
<div class="ln" style="left:-1.7px;top:254px;width:20px;color:#5E6164">15</div>
<div class="code" style="left:60px;top:254px"><span style="color:#808080">//        versionName &quot;1.0&quot;</span></div>
<div class="ln" style="left:-1.7px;top:272px;width:20px;color:#5E6164">16</div>
<div class="code" style="left:60px;top:272px"></div>
<div class="ln" style="left:-1.7px;top:290px;width:20px;color:#5E6164">17</div>
<div class="code" style="left:60px;top:290px"><span style="color:#A9B7C6">        testInstrumentationRunner </span><span style="color:#6A8759">&quot;androidx.test.runner.AndroidJUnitRunner&quot;</span></div>
<div class="ln" style="left:-1.7px;top:308px;width:20px;color:#5E6164">18</div>
<div class="code" style="left:60px;top:308px"><span style="color:#A9B7C6">    }</span></div>
<div class="ln" style="left:-1.7px;top:326px;width:20px;color:#5E6164">19</div>
<div class="code" style="left:60px;top:326px"></div>
<div class="ln" style="left:-1.7px;top:344px;width:20px;color:#5E6164">20</div>
<div class="code" style="left:60px;top:344px"><span style="color:#A9B7C6">    buildTypes {</span></div>
<div class="ln" style="left:-1.7px;top:362px;width:20px;color:#5E6164">21</div>
<div class="code" style="left:60px;top:362px"><span style="color:#A9B7C6">        release {</span></div>
<div class="ln" style="left:-1.7px;top:380px;width:20px;color:#5E6164">22</div>
<div class="code" style="left:60px;top:380px"><span style="color:#A9B7C6">            minifyEnabled </span><span style="color:#CC7832">false</span></div>
<div class="ln" style="left:-1.7px;top:398px;width:20px;color:#5E6164">23</div>
<div class="code" style="left:60px;top:398px"><span style="color:#A9B7C6">            proguardFiles getDefaultProguardFile(</span><span style="color:#6A8759">&#x27;proguard-android-optimize.txt&#x27;</span><span style="color:#A9B7C6">), </span><span style="color:#6A8759">&#x27;proguard-rules.pro&#x27;</span></div>
<div class="ln" style="left:-1.7px;top:416px;width:20px;color:#5E6164">24</div>
<div class="code" style="left:60px;top:416px"><span style="color:#A9B7C6">        }</span></div>
<div class="ln" style="left:-1.7px;top:434px;width:20px;color:#5E6164">25</div>
<div class="code" style="left:60px;top:434px"><span style="color:#A9B7C6">    }</span></div>
<div class="ln" style="left:-1.7px;top:452px;width:20px;color:#5E6164">26</div>
<div class="code" style="left:60px;top:452px"></div>
<div class="ln" style="left:-1.7px;top:470px;width:20px;color:#5E6164">27</div>
<div class="code" style="left:60px;top:470px"><span style="color:#A9B7C6">}</span></div>
<div class="ln" style="left:-1.7px;top:488px;width:20px;color:#5E6164">28</div>
<div class="code" style="left:60px;top:488px"></div>
<div class="ln" style="left:-1.7px;top:506px;width:20px;color:#5E6164">29</div>
<div class="code" style="left:60px;top:506px"><span style="color:#A9B7C6">dependencies {</span></div>
<div class="ln" style="left:-1.7px;top:524px;width:20px;color:#5E6164">30</div>
<div class="code" style="left:60px;top:524px"><span style="color:#A9B7C6">    implementation fileTree(</span><span style="color:#6A8759">dir</span><span style="color:#A9B7C6">: </span><span style="color:#6A8759">&#x27;libs&#x27;</span><span style="color:#A9B7C6">, </span><span style="color:#6A8759">include</span><span style="color:#A9B7C6">: [</span><span style="color:#6A8759">&#x27;*.jar&#x27;</span><span style="color:#A9B7C6">])</span></div>
<svg class="a" style="left:51.5px;top:97px" width="8" height="10" viewBox="0 0 8 10"><path d="M0.5,0.5 L7.5,0.5 L7.5,5.5 L4,9.5 L0.5,5.5 Z" fill="#262626" stroke="#585858"/><path d="M1.5,3 L6.5,3" stroke="#585858" stroke-width="1.2"/></svg>
<svg class="a" style="left:51.5px;top:169px" width="8" height="10" viewBox="0 0 8 10"><path d="M0.5,0.5 L7.5,0.5 L7.5,5.5 L4,9.5 L0.5,5.5 Z" fill="#262626" stroke="#585858"/><path d="M1.5,3 L6.5,3" stroke="#585858" stroke-width="1.2"/></svg>
<svg class="a" style="left:51.5px;top:241px" width="8" height="10" viewBox="0 0 8 10"><path d="M0.5,0.5 L7.5,0.5 L7.5,5.5 L4,9.5 L0.5,5.5 Z" fill="#262626" stroke="#585858"/><path d="M1.5,3 L6.5,3" stroke="#585858" stroke-width="1.2"/></svg>
<svg class="a" style="left:51.5px;top:349px" width="8" height="10" viewBox="0 0 8 10"><path d="M0.5,0.5 L7.5,0.5 L7.5,5.5 L4,9.5 L0.5,5.5 Z" fill="#262626" stroke="#585858"/><path d="M1.5,3 L6.5,3" stroke="#585858" stroke-width="1.2"/></svg>
<svg class="a" style="left:51.5px;top:367px" width="8" height="10" viewBox="0 0 8 10"><path d="M0.5,0.5 L7.5,0.5 L7.5,5.5 L4,9.5 L0.5,5.5 Z" fill="#262626" stroke="#585858"/><path d="M1.5,3 L6.5,3" stroke="#585858" stroke-width="1.2"/></svg>
<svg class="a" style="left:51.5px;top:511px" width="8" height="10" viewBox="0 0 8 10"><path d="M0.5,0.5 L7.5,0.5 L7.5,5.5 L4,9.5 L0.5,5.5 Z" fill="#262626" stroke="#585858"/><path d="M1.5,3 L6.5,3" stroke="#585858" stroke-width="1.2"/></svg>
<svg class="a" style="left:51.5px;top:256px" width="8" height="10" viewBox="0 0 8 10"><path d="M0.5,9.5 L7.5,9.5 L7.5,4 L4,0.5 L0.5,4 Z" fill="#262626" stroke="#585858"/><path d="M1.5,7 L6.5,7" stroke="#585858" stroke-width="1.2"/></svg>
<svg class="a" style="left:51.5px;top:310px" width="8" height="10" viewBox="0 0 8 10"><path d="M0.5,9.5 L7.5,9.5 L7.5,4 L4,0.5 L0.5,4 Z" fill="#262626" stroke="#585858"/><path d="M1.5,7 L6.5,7" stroke="#585858" stroke-width="1.2"/></svg>
<svg class="a" style="left:51.5px;top:418px" width="8" height="10" viewBox="0 0 8 10"><path d="M0.5,9.5 L7.5,9.5 L7.5,4 L4,0.5 L0.5,4 Z" fill="#262626" stroke="#585858"/><path d="M1.5,7 L6.5,7" stroke="#585858" stroke-width="1.2"/></svg>
<svg class="a" style="left:51.5px;top:436px" width="8" height="10" viewBox="0 0 8 10"><path d="M0.5,9.5 L7.5,9.5 L7.5,4 L4,0.5 L0.5,4 Z" fill="#262626" stroke="#585858"/><path d="M1.5,7 L6.5,7" stroke="#585858" stroke-width="1.2"/></svg>
<svg class="a" style="left:51.5px;top:472px" width="8" height="10" viewBox="0 0 8 10"><path d="M0.5,9.5 L7.5,9.5 L7.5,4 L4,0.5 L0.5,4 Z" fill="#262626" stroke="#585858"/><path d="M1.5,7 L6.5,7" stroke="#585858" stroke-width="1.2"/></svg>
<div class="a" style="left:88px;top:171px;width:1px;height:126px;background:#363636"></div>
<div class="a" style="left:88px;top:369px;width:1px;height:54px;background:#363636"></div>
<div class="a" style="left:117px;top:387px;width:1px;height:36px;background:#363636"></div>
<svg class="a" style="left:30px;top:508px" width="8" height="11"><path d="M0.5,0.5 L7.5,5.5 L0.5,10.5 Z" fill="#499C54"/></svg>
<svg class="a" style="left:68px;top:2px" width="12" height="18"><circle cx="6" cy="6.5" r="5" fill="#F0A732"/><rect x="3" y="12" width="6" height="1.2" fill="#CFCFCF"/><rect x="3.5" y="14" width="5" height="1.2" fill="#CFCFCF"/></svg>
</div>
<div class="a" style="left:77px;top:694px;width:1840px;height:297px;background:#37393B;"></div>
<div class="a" style="left:77px;top:694px;width:1840px;height:1px;background:#2A2B2C;"></div>
<div class="a" style="left:77px;top:721px;width:1840px;height:1px;background:#2A2B2C;"></div>
<div class="t" style="left:83px;top:701px;font-size:12.9px;line-height:17px;height:17px;color:#BBBBBB;">Build:</div>
<div class="t" style="left:132px;top:701px;font-size:12.9px;line-height:17px;height:17px;color:#BBBBBB;">Sync</div>
<svg class="a" style="left:167px;top:705px" width="8" height="8" viewBox="0 0 8 8"><path d="M0.5,0.5 L7.5,7.5 M7.5,0.5 L0.5,7.5" stroke="#6E7072" stroke-width="1"/></svg>
<div class="a" style="left:121px;top:719px;width:65px;height:3px;background:#6D737A;"></div>
<svg class="a" style="left:1871px;top:701px" width="14" height="14" viewBox="0 0 14 14"><path d="M8.84,2.46 L8.44,0.76 L5.56,0.76 L5.16,2.46 L3.98,3.14 L2.32,2.64 L0.88,5.13 L2.15,6.32 L2.15,7.68 L0.88,8.87 L2.32,11.36 L3.98,10.86 L5.16,11.54 L5.56,13.24 L8.44,13.24 L8.84,11.54 L10.02,10.86 L11.68,11.36 L13.12,8.87 L11.85,7.68 L11.85,6.32 L13.12,5.13 L11.68,2.64 L10.02,3.14 Z" fill="#AFB1B3"/><circle cx="7" cy="7" r="2" fill="#37393B"/></svg>
<div class="a" style="left:1898px;top:707px;width:12px;height:2px;background:#AFB1B3;"></div>
<div class="a" style="left:105px;top:722px;width:1px;height:269px;background:#2A2B2C;"></div>
<div class="a" style="left:86px;top:732px;width:10px;height:10px;background:#4B4D4F;"></div>
<svg class="a" style="left:83px;top:754px" width="17" height="17" viewBox="0 0 17 17"><path d="M10.2,2 L15.2,6.6 L12,8.2 L10.8,12.8 L4,6.2 L8.5,5 Z" fill="#AFB1B3"/><path d="M7.6,9.2 L1.3,15.6" stroke="#AFB1B3" stroke-width="1.5" stroke-linecap="round"/></svg>
<svg class="a" style="left:83px;top:782px" width="18" height="17" viewBox="0 0 18 17"><path d="M1.2,7 C3.2,1.6 12.8,1.6 14.8,7 C12.8,12.4 3.2,12.4 1.2,7 Z" fill="none" stroke="#AFB1B3" stroke-width="1.9"/><circle cx="8" cy="7" r="2.4" fill="#AFB1B3"/><path d="M11.3,12.7 L17,12.7 L14.15,15.8 Z" fill="#AFB1B3"/></svg>
<svg class="a" style="left:128px;top:728px" width="12" height="10" viewBox="0 0 12 10"><path d="M1,5 L4.5,8.5 L11,1.5" stroke="#499C54" stroke-width="2.4" fill="none"/></svg>
<div class="t" style="left:145px;top:726px;font-size:13.3px;line-height:17px;height:17px;color:#BBBBBB;letter-spacing:-0.04px"><b>UnityPluginTest:</b> successful <span style="color:#878787">at 2020/05/06 3:25 PM</span></div>
<div class="t" style="left:640px;top:726px;font-size:12.2px;line-height:15px;height:15px;color:#808080;">1 s 219 ms</div>
<div class="a" style="left:703px;top:722px;width:1172px;height:269px;background:#262626;"></div>
<div class="a" style="left:1875px;top:722px;width:14px;height:269px;background:#303234;"></div>
<div class="code" style="left:714px;top:742px;color:#BBBBBB">CONFIGURE SUCCESSFUL in 381ms</div>
<div class="a" style="left:1892px;top:726px;width:22px;height:22px;background:#4A4E50;border-radius:4px"></div>
<svg class="a" style="left:1896px;top:730px" width="14" height="14" viewBox="0 0 14 14"><rect x="1" y="1" width="12" height="1.3" fill="#AFB1B3"/><rect x="1" y="5" width="8" height="1.3" fill="#AFB1B3"/><path d="M9,5.6 C13,5.6 13,10.4 9,10.4 L6,10.4" stroke="#AFB1B3" stroke-width="1.3" fill="none"/><path d="M7,8.5 L5,10.4 L7,12.3" stroke="#AFB1B3" stroke-width="1.3" fill="none"/><rect x="1" y="9.6" width="3" height="1.3" fill="#AFB1B3"/></svg>
<div class="a" style="left:1892px;top:752px;width:22px;height:22px;background:#4A4E50;border-radius:4px"></div>
<svg class="a" style="left:1896px;top:756px" width="14" height="14" viewBox="0 0 14 14"><rect x="1" y="2" width="4" height="1.3" fill="#AFB1B3"/><rect x="1" y="6" width="4" height="1.3" fill="#AFB1B3"/><rect x="1" y="11" width="12" height="1.3" fill="#AFB1B3"/><path d="M9.5,0 L9.5,9 M6.5,6 L9.5,9 L12.5,6" stroke="#AFB1B3" stroke-width="1.3" fill="none"/></svg>
<div class="a" style="left:56px;top:991px;width:1882px;height:21px;background:#37393B;"></div>
<div class="a" style="left:56px;top:991px;width:1882px;height:1px;background:#2A2B2C;"></div>
<div class="a" style="left:154px;top:992px;width:61px;height:20px;background:#262626;"></div>
<svg class="a" style="left:87px;top:997px" width="11" height="10" viewBox="0 0 11 10"><rect x="0" y="0" width="11" height="10" fill="#B4B6B8"/><path d="M1.8,2.2 L4.6,4.5 L1.8,6.8" stroke="#37393B" fill="none" stroke-width="1.1"/><rect x="5.5" y="7.2" width="4" height="1.2" fill="#37393B"/></svg>
<div class="t" style="left:103px;top:995px;font-size:11.1px;line-height:14px;height:14px;color:#BBBBBB;">Terminal</div>
<svg class="a" style="left:164px;top:996px" width="14" height="13" viewBox="0 0 14 13"><path d="M0.3,4.2 L4.2,0.3 L7.6,3 L3.2,7 Z" fill="#AFB1B3"/><path d="M5.2,4.4 L12.6,12" stroke="#AFB1B3" stroke-width="2.3"/></svg>
<div class="t" style="left:181px;top:995px;font-size:11.1px;line-height:14px;height:14px;color:#F0F0F0;-webkit-text-stroke:0.35px #F0F0F0">Build</div>
<svg class="a" style="left:227px;top:998px" width="11" height="10" viewBox="0 0 11 10"><rect x="0" y="0.6" width="11" height="1.8" fill="#AFB1B3"/><rect x="0" y="3.8" width="6.5" height="1.8" fill="#AFB1B3"/><rect x="0" y="7" width="9" height="1.8" fill="#AFB1B3"/></svg>
<div class="t" style="left:243px;top:995px;font-size:11.1px;line-height:14px;height:14px;color:#BBBBBB;"><u>6</u>: Logcat</div>
<svg class="a" style="left:310px;top:997px" width="11" height="10" viewBox="0 0 11 10"><rect x="0" y="0.3" width="1.8" height="1.8" fill="#AFB1B3"/><rect x="0" y="4.1" width="1.8" height="1.8" fill="#AFB1B3"/><rect x="0" y="7.9" width="1.8" height="1.8" fill="#AFB1B3"/><rect x="3.2" y="0.3" width="7" height="1.8" fill="#AFB1B3"/><rect x="3.2" y="4.1" width="7" height="1.8" fill="#AFB1B3"/><rect x="3.2" y="7.9" width="7" height="1.8" fill="#AFB1B3"/></svg>
<div class="t" style="left:325px;top:995px;font-size:11.0px;line-height:14px;height:14px;color:#BBBBBB;">TODO</div>
<svg class="a" style="left:1841px;top:996px" width="13" height="13" viewBox="0 0 13 13"><path d="M12.5,12.5 L12.5,6.5 A6,6 0 1 0 6.5,12.5 Z" stroke="#AFB1B3" stroke-width="1.1" fill="none"/></svg>
<div class="t" style="left:1858px;top:995px;font-size:11.3px;line-height:14px;height:14px;color:#BBBBBB;">Event Log</div>
<div class="a" style="left:56px;top:1012px;width:1882px;height:1px;background:#46484A;"></div>
<div class="a" style="left:56px;top:1013px;width:1882px;height:21px;background:#37393B;"></div>
<svg class="a" style="left:62px;top:1018px" width="12" height="12" viewBox="0 0 12 12"><rect x="3.5" y="0.5" width="8" height="8" stroke="#AFB1B3" fill="none"/><path d="M1.5,3 L1.5,10.5 L9,10.5" stroke="#AFB1B3" fill="none"/></svg>
<div class="t" style="left:87px;top:1016px;font-size:11.0px;line-height:14px;height:14px;color:#BBBBBB;">Gradle sync finished in 1 s 82 ms (moments ago)</div>
<div class="t" style="left:1732px;top:1016px;font-size:11.3px;line-height:14px;height:14px;color:#BBBBBB;">2:36</div>
<div class="t" style="left:1765px;top:1016px;font-size:11.3px;line-height:14px;height:14px;color:#BBBBBB;">LF</div>
<div class="t" style="left:1789px;top:1016px;font-size:11.3px;line-height:14px;height:14px;color:#BBBBBB;">UTF-8</div>
<div class="t" style="left:1831px;top:1016px;font-size:11.3px;line-height:14px;height:14px;color:#BBBBBB;">4 spaces</div>
<svg class="a" style="left:1889px;top:1017px" width="11" height="11" viewBox="0 0 11 11"><path d="M1.5,5 L1.5,3 A2.5,2.5 0 0 1 6.5,3" stroke="#AFB1B3" stroke-width="1.3" fill="none"/><rect x="3.5" y="5" width="7.5" height="6" fill="#AFB1B3"/></svg>
<svg class="a" style="left:1914px;top:1016px" width="12" height="14" viewBox="0 0 12 14"><path d="M2,5 L2,2 C2,0.8 3,0.3 6,0.3 C9,0.3 10,0.8 10,2 L10,5 Z" fill="#AFB1B3"/><rect x="0" y="4.3" width="12" height="1.3" fill="#AFB1B3"/><ellipse cx="6" cy="8.6" rx="3.3" ry="3.1" fill="#37393B" stroke="#AFB1B3" stroke-width="1.1"/><circle cx="4.8" cy="8" r="0.5" fill="#AFB1B3"/><circle cx="7.2" cy="8" r="0.5" fill="#AFB1B3"/><path d="M1,13.6 C1.5,12.2 3,11.6 6,11.6 C9,11.6 10.5,12.2 11,13.6 Z" fill="#AFB1B3"/></svg>
<div class="a" style="left:56px;top:38px;width:1882px;height:996px;border-radius:5px;box-shadow:inset -1px -1px 0 #505254, inset 1px 0 0 #46484A"></div>
</div>
</body></html>
